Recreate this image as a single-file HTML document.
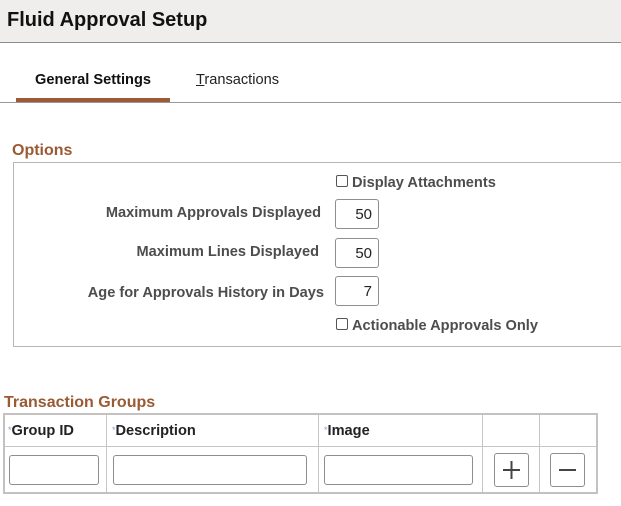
<!DOCTYPE html>
<html><head><style>
body{margin:0;width:621px;height:506px;background:#fff;font-family:"Liberation Sans",Arial,sans-serif;position:relative;overflow:hidden}
.a{position:absolute;white-space:nowrap}
.hdr{left:0;top:0;width:621px;height:42px;background:#efeeed;border-bottom:1px solid #8c8c8c}
.lbl{font-weight:bold;font-size:14.6px;color:#4d4d4d;text-align:right}
.in{border:1px solid #8e8e8e;border-radius:3px;background:#fff;box-sizing:border-box;font-size:15px;color:#222;text-align:right;padding-right:6px;line-height:29px}
.cb{width:12px;height:12px;border:1px solid #555;border-radius:2px;box-sizing:border-box}
.th{font-weight:bold;font-size:14.6px;color:#222}
.st{color:#7aa0c8;font-size:9px;font-weight:normal;vertical-align:2px}
</style></head><body>
<div class="a hdr"></div>
<div class="a" style="left:7px;top:9px;font-size:20px;font-weight:bold;color:#111">Fluid Approval Setup</div>
<div class="a" style="left:35px;top:72px;font-size:14.6px;font-weight:bold;color:#111">General Settings</div>
<div class="a" style="left:196px;top:72px;font-size:14.6px;color:#222"><u>T</u>ransactions</div>
<div class="a" style="left:0;top:102px;width:621px;height:1px;background:#999"></div>
<div class="a" style="left:16px;top:98px;width:154px;height:4px;background:#9c5a3a"></div>
<div class="a" style="left:12px;top:142px;font-size:16px;font-weight:bold;color:#9a5a34">Options</div>
<div class="a" style="left:13px;top:162px;width:620px;height:185px;border:1px solid #bdb6b0;box-sizing:border-box"></div>
<div class="a cb" style="left:336px;top:175px"></div>
<div class="a lbl" style="left:352px;top:175px">Display Attachments</div>
<div class="a lbl" style="right:300px;top:205px">Maximum Approvals Displayed</div>
<div class="a in" style="left:335px;top:199px;width:44px;height:30px">50</div>
<div class="a lbl" style="right:302px;top:244px">Maximum Lines Displayed</div>
<div class="a in" style="left:335px;top:238px;width:44px;height:30px">50</div>
<div class="a lbl" style="right:297px;top:285px">Age for Approvals History in Days</div>
<div class="a in" style="left:335px;top:276px;width:44px;height:30px">7</div>
<div class="a cb" style="left:336px;top:318px"></div>
<div class="a lbl" style="left:352px;top:318px">Actionable Approvals Only</div>
<div class="a" style="left:4px;top:394px;font-size:16px;font-weight:bold;color:#9a5a34">Transaction Groups</div>
<div class="a" style="left:3px;top:413px;width:595px;height:81px;border:2px solid #c4c2c0;box-sizing:border-box"></div>
<div class="a" style="left:5px;top:446px;width:591px;height:1px;background:#c8c6c4"></div>
<div class="a" style="left:106px;top:415px;width:1px;height:77px;background:#c8c6c4"></div>
<div class="a" style="left:318px;top:415px;width:1px;height:77px;background:#c8c6c4"></div>
<div class="a" style="left:482px;top:415px;width:1px;height:77px;background:#c8c6c4"></div>
<div class="a" style="left:539px;top:415px;width:1px;height:77px;background:#c8c6c4"></div>
<div class="a th" style="left:8px;top:423px"><span class="st">*</span>Group ID</div>
<div class="a th" style="left:112px;top:423px"><span class="st">*</span>Description</div>
<div class="a th" style="left:324px;top:423px"><span class="st">*</span>Image</div>
<div class="a in" style="left:9px;top:455px;width:90px;height:30px"></div>
<div class="a in" style="left:113px;top:455px;width:194px;height:30px"></div>
<div class="a in" style="left:324px;top:455px;width:149px;height:30px"></div>
<div class="a in" style="left:494px;top:453px;width:35px;height:34px"></div>
<svg class="a" style="left:494px;top:453px" width="35" height="34"><path d="M9 17H26M17.5 8V26" stroke="#444" stroke-width="2"/></svg>
<div class="a in" style="left:550px;top:453px;width:35px;height:34px"></div>
<svg class="a" style="left:550px;top:453px" width="35" height="34"><path d="M9 17H26" stroke="#444" stroke-width="2"/></svg>
</body></html>
